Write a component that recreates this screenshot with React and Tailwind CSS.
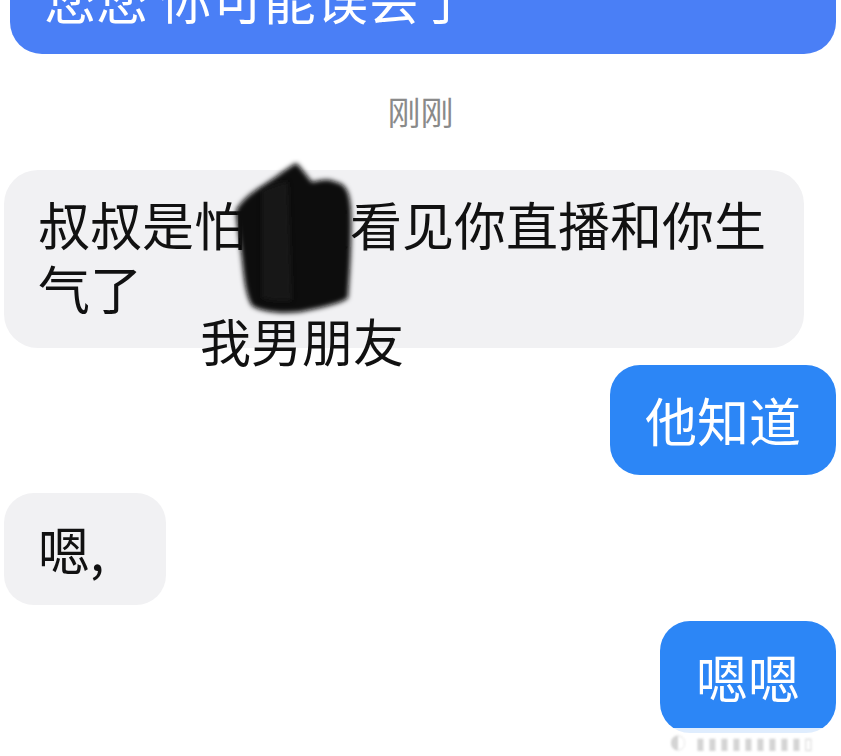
import React from "react";

const FONT = { fontFamily: '"Noto Sans CJK SC", "Noto Sans", sans-serif' };

function Blob() {
  // the hand-drawn black scribble that hides a name
  return (
    <svg
      className="absolute left-[220px] top-[152px] pointer-events-none"
      width="145"
      height="172"
      viewBox="220 152 145 172"
    >
      <defs>
        <filter id="soft" x="-20%" y="-20%" width="140%" height="140%">
          <feGaussianBlur stdDeviation="2.4" />
        </filter>
      </defs>
      <path
        filter="url(#soft)"
        fill="#080808"
        d="M296 163 C300 166 304 172 312 182 C320 180 328 178 336 182 C346 184 350 192 351 210 C352 240 350 270 348 298 C340 304 320 308 300 312 C280 314 262 312 252 306 C246 296 244 280 242 260 C240 240 236 222 236 210 C242 200 252 192 262 186 C272 180 284 170 296 163 Z"
      />
      <path filter="url(#soft)" fill="#1e1e1e" opacity="0.7" d="M262 190 C270 186 280 182 288 182 L292 300 C282 302 270 300 262 298 Z" />
    </svg>
  );
}

export default function App() {
  return (
    <div className="relative w-[841px] h-[756px] overflow-hidden bg-white" style={FONT}>
      <div className="flex flex-col">
        {/* top message, cut off by the screen edge */}
        <div className="-mt-[58px] ml-[10px] mr-[5px] rounded-[32px] bg-[#4a7ff6] pl-[34px] py-[24px] text-[52px] leading-[64px] text-white">
          您您 你可能误会了
        </div>

        <div className="mt-[37px] text-center text-[33px] leading-[40px] text-[#8a8a8a]">刚刚</div>

        <div className="mt-[39px] ml-[4px] w-[800px] rounded-[34px] bg-[#f1f1f3] pl-[34px] pr-[30px] pt-[22px] pb-[28px] text-[52px] leading-[64px] text-[#111]">
          叔叔是怕男友看见你直播和你生气了
        </div>

        <div className="mt-[17px] mr-[5px] self-end rounded-[30px] bg-[#2c86f6] px-[35px] py-[23px] text-[52px] leading-[64px] text-white">
          他知道
        </div>

        <div className="mt-[18px] ml-[4px] self-start w-[162px] rounded-[30px] bg-[#f1f1f3] pl-[34px] py-[24px] text-[52px] leading-[64px] text-[#111]">
          嗯,
        </div>

        <div className="mt-[16px] mr-[5px] self-end rounded-[30px] bg-[#2c86f6] px-[36px] py-[24px] text-[52px] leading-[64px] text-white">
          嗯嗯
        </div>
      </div>

      <Blob />

      <div className="absolute left-[200px] top-[308px] text-[51px] leading-[64px] text-[#111]">我男朋友</div>

      {/* faded watermark strip at the bottom */}
      <div className="absolute left-[664px] top-[728px] w-[177px] h-[28px] bg-white/85 flex items-center pl-[6px]">
        <span className="text-[16px] text-[#d4d4d4] tracking-[3px] blur-[1px]">◐ ▮▮▮▮▮▮▮▮▮▯</span>
      </div>
    </div>
  );
}
